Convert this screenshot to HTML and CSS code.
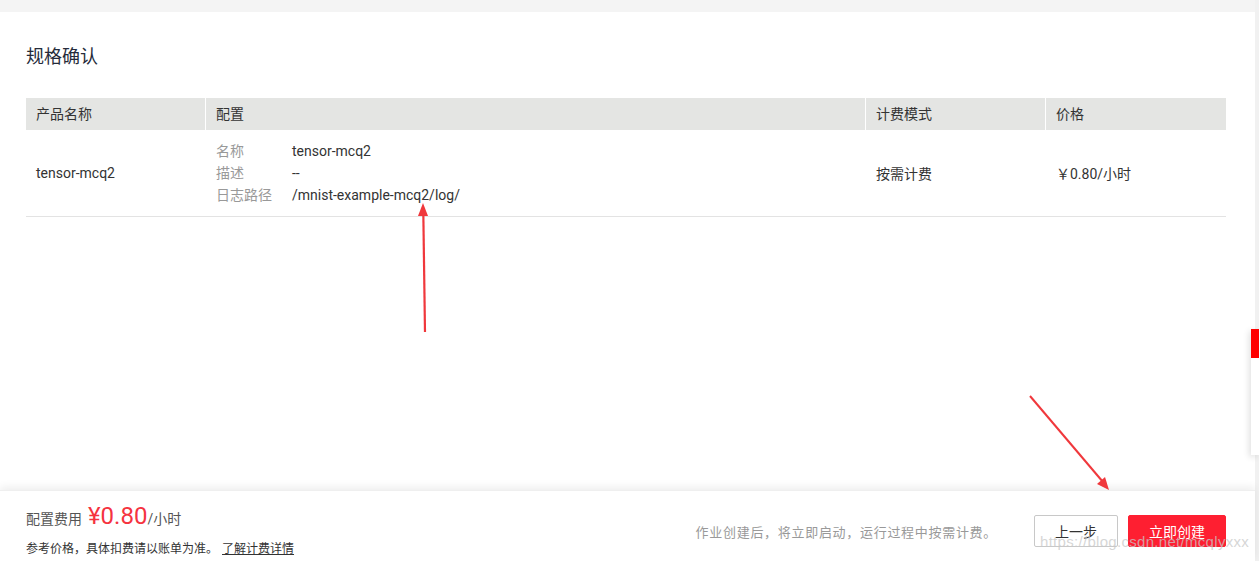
FILE: index.html
```html
<!DOCTYPE html>
<html lang="zh-CN">
<head>
<meta charset="utf-8">
<title>规格确认</title>
<link rel="stylesheet" href="styles.css">
</head>
<body>
<div class="page">
  <div class="content">
    <div class="topbar"></div>
    <main class="main">
      <h2 class="title">规格确认</h2>
      <div class="table">
        <div class="thead">
          <div class="th c1">产品名称</div>
          <div class="th c2">配置</div>
          <div class="th c3">计费模式</div>
          <div class="th c4">价格</div>
        </div>
        <div class="trow">
          <div class="td c1">tensor-mcq2</div>
          <div class="td c2">
            <dl class="spec">
              <dt>名称</dt><dd>tensor-mcq2</dd>
              <dt>描述</dt><dd>--</dd>
              <dt>日志路径</dt><dd>/mnist-example-mcq2/log/</dd>
            </dl>
          </div>
          <div class="td c3">按需计费</div>
          <div class="td c4">￥0.80/小时</div>
        </div>
      </div>
    </main>
    <footer class="footer">
      <div class="fee">
        <div class="fee-line"><span class="fee-label">配置费用</span><span class="fee-price">¥0.80</span><span class="fee-unit">/小时</span></div>
        <div class="fee-note">参考价格，具体扣费请以账单为准。<a class="fee-link" href="#">了解计费详情</a></div>
      </div>
      <div class="actions">
        <span class="hint">作业创建后，将立即启动，运行过程中按需计费。</span>
        <button class="btn btn-prev">上一步</button>
        <button class="btn btn-create">立即创建</button>
      </div>
    </footer>
  </div>
  <div class="scrollstrip"></div>
</div>
<div class="sidetab"></div>
<div class="watermark">https://blog.csdn.net/mcqlyxxx</div>
<svg class="annot" width="1259" height="561" viewBox="0 0 1259 561">
  <line x1="425" y1="332" x2="423.3" y2="212" stroke="#f0383c" stroke-width="2.2"/>
  <polygon points="423,203 418,216 428,216" fill="#f0383c"/>
  <line x1="1030" y1="396" x2="1103" y2="482" stroke="#f0383c" stroke-width="2"/>
  <polygon points="1109,490 1097,484 1105,477" fill="#f0383c"/>
</svg>
</body>
</html>
```
FILE: styles.css
```css
* { box-sizing: border-box; }
html, body { margin: 0; padding: 0; }
body {
  width: 1259px;
  height: 561px;
  overflow: hidden;
  font-family: Roboto, "Noto Sans CJK SC", sans-serif;
  color: #333;
  background: #fff;
  position: relative;
}
.page {
  display: flex;
  height: 561px;
}
.content {
  flex: 1;
  display: flex;
  flex-direction: column;
  min-width: 0;
}
.scrollstrip {
  width: 4px;
  background: #f1f1f1;
}
.topbar {
  height: 12px;
  background: #f4f4f4;
}
.main {
  flex: 1;
  padding: 31px 29px 0 26px;
}
.title {
  margin: 0;
  font-size: 18px;
  font-weight: normal;
  line-height: 24px;
  color: #252b3a;
  font-family: "Noto Sans CJK SC", sans-serif;
}
.table {
  margin-top: 31px;
  width: 1200px;
  font-size: 14px;
}
.thead, .trow {
  display: grid;
  grid-template-columns: 179px 660px 180px 181px;
}
.thead {
  background: #e4e5e3;
  height: 32px;
}
.th {
  line-height: 32px;
  padding-left: 10px;
  color: #333;
}
.th + .th { border-left: 1px solid #fff; }
.trow {
  height: 87px;
  border-bottom: 1px solid #e3e3e3;
}
.td {
  display: flex;
  align-items: center;
  padding-left: 10px;
  color: #333;
}
.trow .c2, .trow .c3, .trow .c4 { padding-left: 11px; }
.spec {
  margin: 0;
  display: grid;
  grid-template-columns: 76px auto;
  line-height: 22px;
}
.spec dt { color: #999; }
.spec dd { margin: 0; color: #333; }
.footer {
  height: 71px;
  display: flex;
  align-items: center;
  justify-content: space-between;
  padding: 0 29px 0 26px;
  box-shadow: 0 -3px 8px rgba(0, 0, 0, 0.07);
  border-top: 1px solid #efefef;
  position: relative;
  background: #fff;
}
.fee { padding-top: 8px; }
.fee-line {
  display: flex;
  align-items: baseline;
  height: 30px;
}
.fee-label { font-size: 14px; color: #555; }
.fee-price {
  font-size: 24px;
  color: #f5333f;
  margin-left: 6px;
  font-family: Roboto, sans-serif;
}
.fee-unit { font-size: 14px; color: #555; }
.fee-note {
  font-size: 12px;
  color: #333;
  line-height: 20px;
  margin-top: 7px;
}
.fee-link {
  color: #333;
  margin-left: 4px;
  text-decoration: underline;
}
.actions {
  display: flex;
  align-items: center;
  padding-top: 10px;
}
.hint {
  font-size: 13px;
  letter-spacing: 0.7px;
  color: #999;
  margin-right: 37px;
}
.btn {
  height: 32px;
  font-size: 14px;
  font-family: "Noto Sans CJK SC", sans-serif;
  border-radius: 2px;
  cursor: pointer;
}
.btn-prev {
  width: 84px;
  background: #fff;
  border: 1px solid #c8c8c8;
  color: #333;
}
.btn-create {
  width: 98px;
  margin-left: 10px;
  background: #fe1f31;
  border: 1px solid #fe1f31;
  color: #fff;
}
.sidetab {
  position: absolute;
  left: 1251px;
  top: 329px;
  width: 8px;
  height: 126px;
  background: #fff;
  box-shadow: -2px 2px 6px rgba(0, 0, 0, 0.12);
  border-top: 29px solid #ff0000;
}
.watermark {
  position: absolute;
  left: 1040px;
  top: 533px;
  font-size: 15px;
  letter-spacing: 0.3px;
  font-family: "Liberation Sans", sans-serif;
  color: rgba(200, 200, 200, 0.75);
  pointer-events: none;
}
.annot {
  position: absolute;
  left: 0;
  top: 0;
  pointer-events: none;
}
```
